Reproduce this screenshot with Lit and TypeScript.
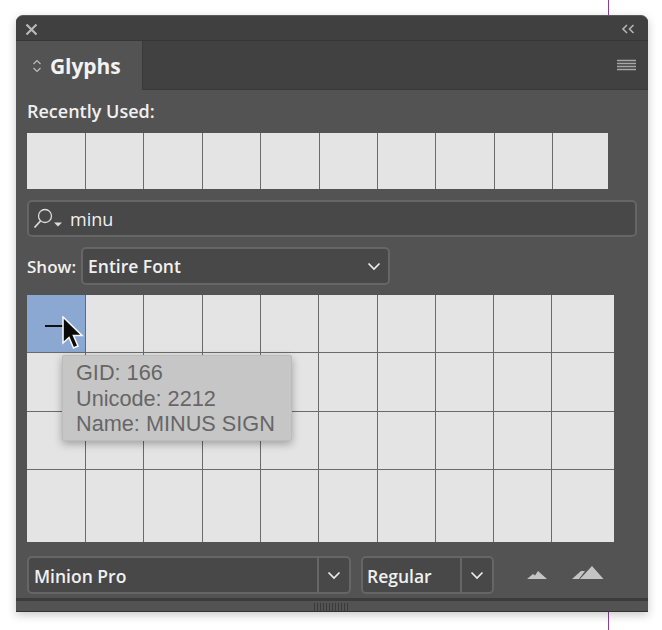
import { LitElement, html, css } from "lit";
import { customElement } from "lit/decorators.js";

const chevron = html`<svg class="chev" width="14" height="9" viewBox="0 0 14 9"><path d="M1.5 1.5 L7 7 L12.5 1.5" fill="none" stroke="#ececec" stroke-width="1.7"/></svg>`;

@customElement("app-root")
export class AppRoot extends LitElement {
  static styles = css`
    :host { display: block; position: relative; width: 662px; height: 630px; background: #fff; overflow: hidden;
      font-family: "Open Sans", "DejaVu Sans", sans-serif; color: #f0f0f0; }
    * { box-sizing: border-box; }
    .guide { position: absolute; left: 608px; top: 0; width: 1px; height: 630px; background: #8a3fa0; }
    .stage { position: relative; padding: 15px 14px 0 16px; }
    .panel { width: 632px; height: 597px; background: #535353; border-radius: 7px 7px 0 0; border-bottom: 1px solid #333;
      box-shadow: 0 3px 10px rgba(0,0,0,.22); display: flex; flex-direction: column; overflow: hidden; border-top: 1px solid #5a5a5a; }
    .title { height: 25px; flex: none; background: #404040; border-bottom: 1px solid #363636; display: flex; align-items: center; justify-content: space-between; padding: 2px 13px 0 9px; }
    .tabs { height: 49px; flex: none; background: #414141; display: flex; justify-content: space-between; align-items: center; padding: 2px 12px 0 0; border-bottom: 1px solid #3a3a3a; }
    .tab { width: 127px; height: 49px; margin-top: -2px; background: #535353; border-right: 1px solid #3a3a3a; display: flex; align-items: center; gap: 8px; padding: 2px 0 0 16px;
      font-size: 21px; font-weight: 700; color: #f2f2f2; letter-spacing: -.1px; }
    .body { flex: 1; padding: 0 11px; display: flex; flex-direction: column; }
    .label { font-size: 18px; font-weight: 600; height: 23px; line-height: 23px; margin-top: 10px; color: #f0f0f0; }
    .grid { display: grid; background: #e4e4e4; }
    .recent { width: 581px; height: 56px; margin-top: 10px; grid-template-columns: 59px 58px 59px 58px 59px 58px 58px 59px 58px 1fr; }
    .main { width: 587px; height: 247px; margin-top: 10px; grid-template-columns: 59px 58px 59px 58px 58px 59px 58px 58px 58px 1fr; grid-template-rows: 58px 59px 58px 1fr; }
    .cell { border-right: 1px solid #6a6a6a; border-bottom: 1px solid #6a6a6a; }
    .cell.re { border-bottom: none; }
    .cell.last-row { border-bottom: none; }
    .cell.last-col { border-right: none; }
    .cell.sel { background: #8aa8d2; position: relative; }
    .minus { position: absolute; left: 18px; top: 30px; width: 18px; height: 2px; background: #111; }
    .box { background: #484848; border: 2px solid #666; border-radius: 5px; display: flex; align-items: center; font-size: 17.5px; font-weight: 600; color: #f0f0f0; }
    .search { width: 610px; height: 37px; margin-top: 11px; padding-left: 3px; gap: 6px; font-size: 18px; font-weight: 500; }
    .show { display: flex; align-items: center; gap: 3px; margin-top: 10px; height: 38px; }
    .show .lab { font-size: 17px; font-weight: 600; width: 51px; flex: none; }
    .sel1 { width: 309px; height: 38px; padding: 0 7px 0 5px; justify-content: space-between; }
    .bottom { display: flex; align-items: center; gap: 10px; margin-top: 14px; height: 38px; }
    .combo { height: 38px; padding-left: 5px; }
    .combo .t { flex: 1; padding-top: 1px; }
    .combo .b { width: 32px; height: 100%; border-left: 2px solid #666; display: flex; align-items: center; justify-content: center; }
    .f1 { width: 324px; }
    .f2 { width: 133px; padding-left: 4px; }
    .sizes { display: flex; align-items: flex-end; gap: 25px; margin-left: 23px; height: 24px; margin-top: -15px; }
    .foot { height: 13px; flex: none; margin-top: 4px; background: #535353; border-top: 3px solid #3c3c3c; display: flex; justify-content: center; align-items: center; position: relative; }
    .grip { width: 36px; height: 8px; background: repeating-linear-gradient(90deg, #3a3a3a 0 1px, transparent 1px 3px); margin-top: 1px; }
    .tip { position: absolute; left: 62px; top: 355px; width: 230px; height: 86px; background: #c6c6c6; border: 1px solid #bcbcbc; border-radius: 2px;
      box-shadow: 0 3px 8px rgba(0,0,0,.3); padding: 4px 0 0 13px; font-family: "Liberation Sans", Arial, sans-serif; font-size: 21.7px; line-height: 25.5px; color: #666; white-space: nowrap; }
    .cursor { position: absolute; left: 61px; top: 316px; }
  `;

  render() {
    const recent = Array.from({ length: 10 }, (_, i) => html`<div class="cell re ${i === 9 ? "last-col" : ""}"></div>`);
    const cells = Array.from({ length: 40 }, (_, i) => {
      const cls = ["cell", i === 0 ? "sel" : "", i % 10 === 9 ? "last-col" : "", i >= 30 ? "last-row" : ""].join(" ");
      return html`<div class=${cls}>${i === 0 ? html`<div class="minus"></div>` : ""}</div>`;
    });
    return html`
      <div class="guide"></div>
      <div class="stage">
        <div class="panel">
          <div class="title">
            <svg width="13" height="13" viewBox="0 0 13 13"><path d="M1.5 1.5 L11.5 11.5 M11.5 1.5 L1.5 11.5" stroke="#b8b8b8" stroke-width="2.2"/></svg>
            <svg width="14" height="10" viewBox="0 0 14 10"><path d="M6 1 L2 5 L6 9 M12.5 1 L8.5 5 L12.5 9" fill="none" stroke="#b4b4b4" stroke-width="1.6"/></svg>
          </div>
          <div class="tabs">
            <div class="tab">
              <svg width="10" height="16" viewBox="0 0 10 16"><path d="M1.5 6 L5 2.5 L8.5 6 M1.5 10 L5 13.5 L8.5 10" fill="none" stroke="#bdbdbd" stroke-width="1.2"/></svg>
              <span>Glyphs</span>
            </div>
            <svg width="19" height="14" viewBox="0 0 19 14"><path d="M0 1.5H19M0 4.5H19M0 7.5H19M0 10.5H19" stroke="#a8a8a8" stroke-width="1.6" fill="none"/></svg>
          </div>
          <div class="body">
            <div class="label">Recently Used:</div>
            <div class="grid recent">${recent}</div>
            <div class="box search">
              <svg width="32" height="24" viewBox="0 0 32 24">
                <circle cx="13" cy="9" r="6.5" fill="none" stroke="#dcdcdc" stroke-width="1.3"/>
                <path d="M8.5 14 L2.5 20.5" stroke="#dcdcdc" stroke-width="1.8"/>
                <path d="M22 15.5 H30 L26 19.5 Z" fill="#dcdcdc"/>
              </svg>
              <span>minu</span>
            </div>
            <div class="show">
              <div class="lab">Show:</div>
              <div class="box sel1"><span>Entire Font</span>${chevron}</div>
            </div>
            <div class="grid main">${cells}</div>
            <div class="bottom">
              <div class="box combo f1"><div class="t">Minion Pro</div><div class="b">${chevron}</div></div>
              <div class="box combo f2"><div class="t">Regular</div><div class="b">${chevron}</div></div>
              <div class="sizes">
                <svg width="20" height="12" viewBox="0 0 20 12"><path d="M0 11 L6 6 L8 7.5 L11 3 L20 11 Z" fill="#c4c4c4"/></svg>
                <svg width="32" height="15" viewBox="0 0 32 15"><path d="M0 14 L9 6 L13 6 L7 14 Z M8 14 L20 1 L31.5 14 Z" fill="#c4c4c4"/></svg>
              </div>
            </div>
          </div>
          <div class="foot"><div class="grip"></div></div>
        </div>
      </div>
      <div class="tip">GID: 166<br />Unicode: 2212<br />Name: MINUS SIGN</div>
      <svg class="cursor" width="24" height="36" viewBox="0 0 24 36">
        <path d="M2 1 L2 27 L8 21.5 L12.5 32 L17 30 L12.5 19.5 L21 19.5 Z" fill="#0a0a0a" stroke="#f4f4f4" stroke-width="1.6"/>
      </svg>
    `;
  }
}
